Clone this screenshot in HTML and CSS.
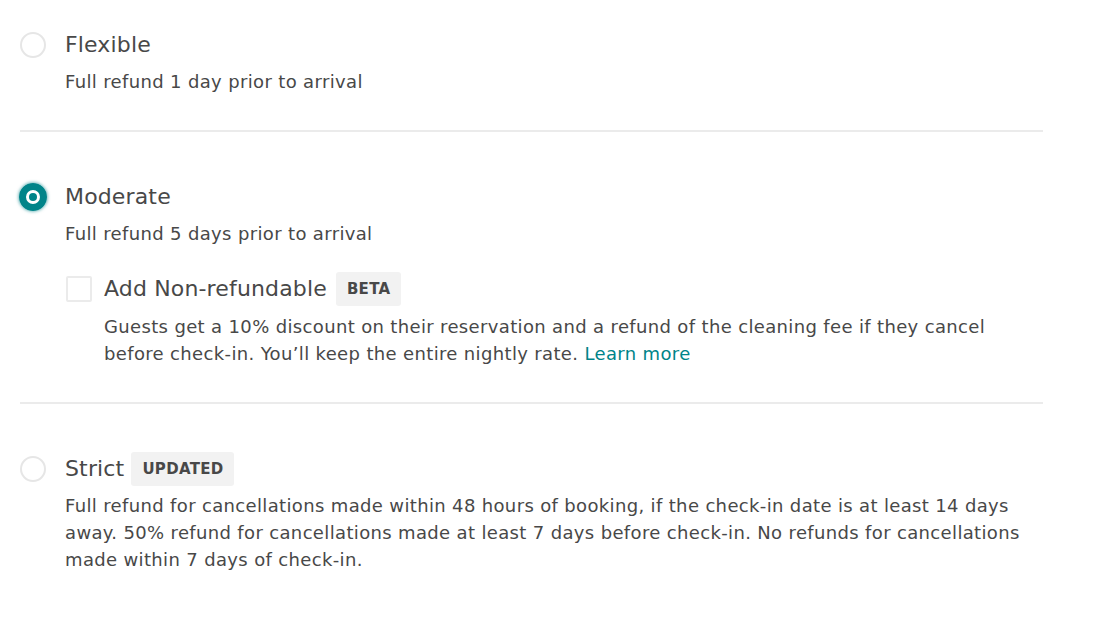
FILE: index.html
```html
<!DOCTYPE html>
<html>
<head>
<meta charset="utf-8">
<link rel="stylesheet" href="styles.css">
</head>
<body>
<div class="list">
  <div class="option first">
    <div class="row">
      <span class="radio"></span>
      <span class="title">Flexible</span>
    </div>
    <div class="body">
      <p class="desc">Full refund 1 day prior to arrival</p>
    </div>
  </div>
  <div class="option">
    <div class="row">
      <span class="radio checked"></span>
      <span class="title">Moderate</span>
    </div>
    <div class="body">
      <p class="desc">Full refund 5 days prior to arrival</p>
      <div class="sub">
        <div class="subrow">
          <span class="check"></span>
          <span class="title">Add Non-refundable</span>
          <span class="badge">BETA</span>
        </div>
        <p class="desc subdesc">Guests get a 10% discount on their reservation and a refund of the cleaning fee if they cancel before check-in. You’ll keep the entire nightly rate. <a class="link" href="#">Learn more</a></p>
      </div>
    </div>
  </div>
  <div class="option last">
    <div class="row">
      <span class="radio"></span>
      <span class="title">Strict</span>
      <span class="badge">UPDATED</span>
    </div>
    <div class="body">
      <p class="desc">Full refund for cancellations made within 48 hours of booking, if the check-in date is at least 14 days away. 50% refund for cancellations made at least 7 days before check-in. No refunds for cancellations made within 7 days of check-in.</p>
    </div>
  </div>
</div>
</body>
</html>
```
FILE: styles.css
```css
* { box-sizing: border-box; }
body {
  margin: 0;
  background: #fff;
  font-family: "DejaVu Sans", sans-serif;
  color: #484848;
}
.list {
  width: 1043px;
  padding-left: 20px;
}
.option {
  padding: 48px 0 35px;
  border-bottom: 2px solid #ebebeb;
}
.option.first { padding-top: 28px; }
.option.last { border-bottom: none; }
.row {
  display: flex;
  align-items: center;
  height: 34px;
}
.radio {
  width: 26px;
  height: 26px;
  border-radius: 50%;
  border: 2px solid #e6e6e6;
  flex: none;
  margin-right: 19px;
}
.radio.checked {
  border: 7px solid #008489;
  box-shadow: 0 0 3px 1px rgba(0,132,137,0.5);
  position: relative;
  width: 28px;
  height: 28px;
  margin-left: -1px;
  margin-right: 18px;
}
.radio.checked::after {
  content: "";
  position: absolute;
  left: 50%;
  top: 50%;
  width: 8px;
  height: 8px;
  margin: -4px 0 0 -4px;
  border-radius: 50%;
  background: #008489;
}
.title {
  font-size: 22px;
  line-height: 28px;
  letter-spacing: 0.15px;
}
.badge {
  margin-left: 9px;
  background: #f2f2f2;
  border-radius: 3px;
  font-size: 15px;
  font-weight: bold;
  line-height: 34px;
  padding: 0 11px;
  letter-spacing: 0.3px;
}
.row .badge { margin-left: 7px; }
.body {
  padding-left: 45px;
  margin-top: 6px;
}
.desc {
  margin: 0;
  font-size: 18px;
  line-height: 27px;
  letter-spacing: 0.35px;
}
.sub {
  margin-top: 24px;
}
.subrow {
  display: flex;
  align-items: center;
  height: 35px;
}
.check {
  width: 26px;
  height: 26px;
  border: 2px solid #ebebeb;
  border-radius: 2px;
  margin-left: 1px;
  margin-right: 12px;
  flex: none;
}
.subdesc {
  padding-left: 39px;
  padding-right: 20px;
  margin-top: 7px;
}
.link {
  color: #008489;
  text-decoration: none;
}
```
